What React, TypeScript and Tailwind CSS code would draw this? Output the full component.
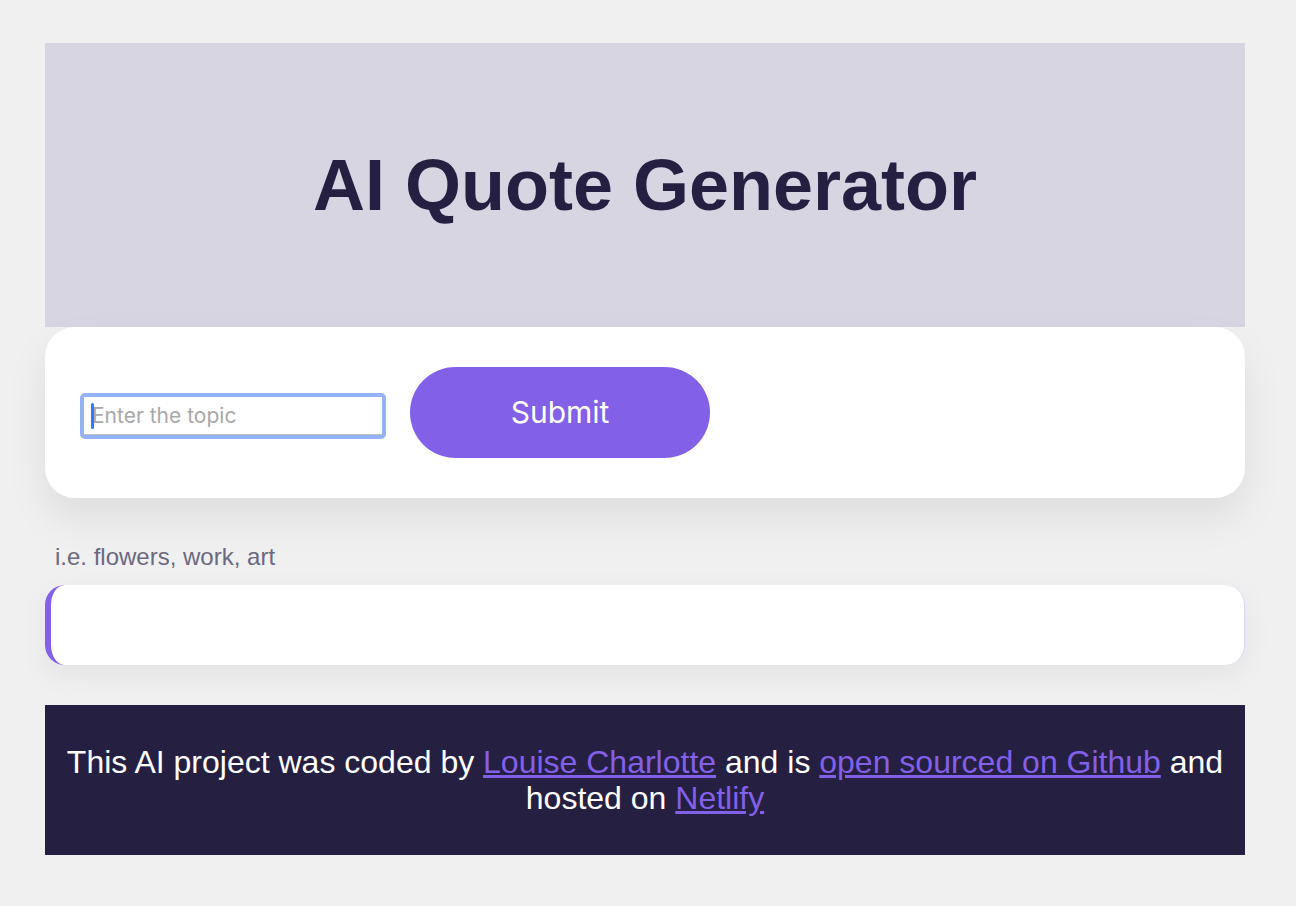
import React from 'react'

export default function App() {
  return (
    <div className="min-h-[906px] bg-[#f0f0f0] pt-[43px] pb-[49px]" style={{ fontFamily: '"Liberation Sans", Arial, sans-serif' }}>
      <div className="ml-[45px] w-[1200px]">
        <header className="flex h-[284px] items-center justify-center bg-[#d8d5e3]">
          <h1 className="text-[72px] font-bold leading-none text-[#251f42]">AI Quote Generator</h1>
        </header>

        <form
          className="flex items-center gap-6 rounded-[30px] bg-white px-[35px] py-10 shadow-[0_20px_40px_rgba(0,0,0,0.08)]"
          onSubmit={(e) => e.preventDefault()}
        >
          <div className="relative mt-[7px] w-[306px] rounded-[5px] bg-[#93b3f4] p-1">
            <input
              type="text"
              placeholder="Enter the topic"
              className="block h-[38px] w-full border-b border-[#c0c0c0] bg-white px-2 text-[21px] text-[#333] placeholder:text-[#a8a8a8] outline-none"
              style={{ fontFamily: 'Inter, "Noto Sans", sans-serif' }}
            />
            <span className="absolute left-[11px] top-[10px] h-[26px] w-[3px] rounded-sm bg-[#3478f6]" />
          </div>
          <button
            type="submit"
            className="h-[91px] w-[300px] rounded-full bg-[#8360e8] text-[30px] text-white"
            style={{ fontFamily: 'Inter, "Noto Sans", sans-serif' }}
          >
            Submit
          </button>
        </form>

        <p className="mt-[45px] pl-[10px] text-[24px] leading-7 text-[#6b6880]">i.e. flowers, work, art</p>

        <div className="mt-[14px] h-[80px] rounded-[20px] border-l-[6px] border-r border-[#8360e8] border-r-[#d9d4f7] bg-white shadow-[0_10px_30px_rgba(0,0,0,0.06)]" />

        <footer className="mt-10 bg-[#251f42] px-5 py-[39px] text-center text-[32px] leading-[36px] text-white">
          This AI project was coded by{' '}
          <a href="#" className="text-[#8360e8] underline">Louise Charlotte</a> and is{' '}
          <a href="#" className="text-[#8360e8] underline">open sourced on Github</a> and hosted on{' '}
          <a href="#" className="text-[#8360e8] underline">Netlify</a>
        </footer>
      </div>
    </div>
  )
}
